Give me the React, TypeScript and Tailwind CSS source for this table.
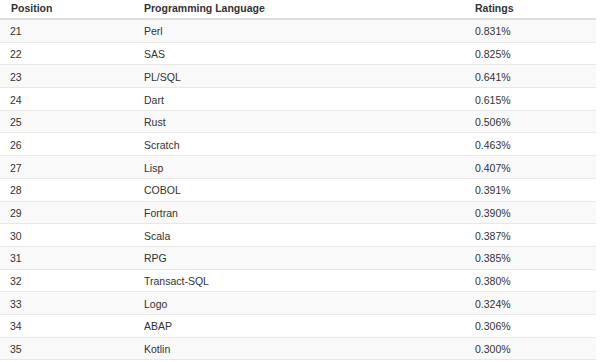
const rows = [
    ["21", "Perl", "0.831%"],
    ["22", "SAS", "0.825%"],
    ["23", "PL/SQL", "0.641%"],
    ["24", "Dart", "0.615%"],
    ["25", "Rust", "0.506%"],
    ["26", "Scratch", "0.463%"],
    ["27", "Lisp", "0.407%"],
    ["28", "COBOL", "0.391%"],
    ["29", "Fortran", "0.390%"],
    ["30", "Scala", "0.387%"],
    ["31", "RPG", "0.385%"],
    ["32", "Transact-SQL", "0.380%"],
    ["33", "Logo", "0.324%"],
    ["34", "ABAP", "0.306%"],
    ["35", "Kotlin", "0.300%"],
];

export default function App() {

    return (

        <div
            className="h-[362px] w-[600px] overflow-hidden bg-white text-[10.5px] text-[#333]"
            style={{ fontFamily: '"Liberation Sans", Arial, sans-serif' }}
        >

            <div className="w-[596px]">

                <div className="grid h-[20px] grid-cols-[134px_331px_131px] items-center border-b-2 border-[#ddd] font-bold">

                    <div className="pl-[11px]">Position</div>

                    <div className="pl-[10px]">Programming Language</div>

                    <div className="pl-[10px]">Ratings</div>

                </div>

                {rows.map((row, i) => (

                    <div
                        key={row[0]}
                        className={
                            i % 2 === 0
                                ? "grid h-[22.7px] grid-cols-[134px_331px_131px] items-center border-b border-[#e8e8e8] bg-[#f9f9f9] pt-[3px]"
                                : "grid h-[22.7px] grid-cols-[134px_331px_131px] items-center border-b border-[#e8e8e8] bg-white pt-[3px]"
                        }
                    >

                        <div className="pl-[10px]">{row[0]}</div>

                        <div className="pl-[10px]">{row[1]}</div>

                        <div className="pl-[10px]">{row[2]}</div>

                    </div>

                ))}

            </div>

        </div>

    );

}
